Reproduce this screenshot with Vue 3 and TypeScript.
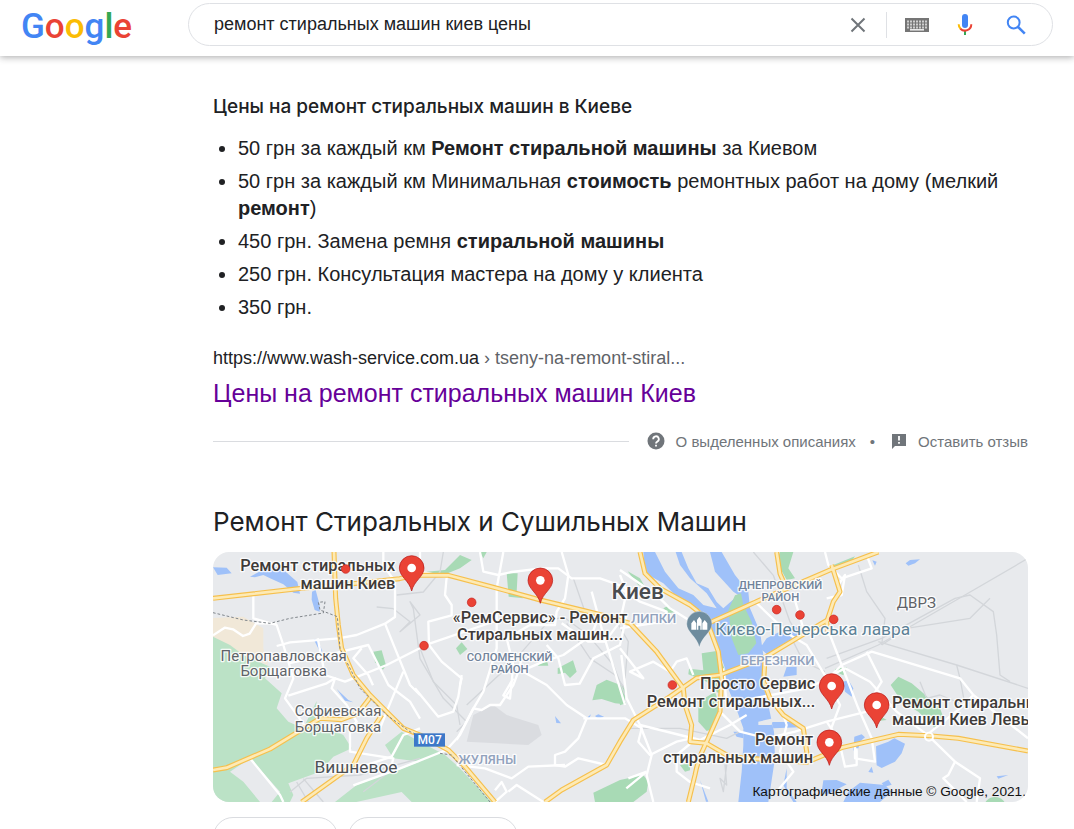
<script setup lang="ts">
import { ref } from 'vue'

interface Run { text: string; bold?: boolean }
interface Label { x: number; y: number; text: string; kind: string; anchor?: 'start' | 'middle' | 'end' }

const query = ref('ремонт стиральных машин киев цены')

const prices: Run[][] = [
  [{ text: '50 грн за каждый км ' }, { text: 'Ремонт стиральной машины', bold: true }, { text: ' за Киевом' }],
  [
    { text: '50 грн за каждый км Минимальная ' },
    { text: 'стоимость', bold: true },
    { text: ' ремонтных работ на дому (мелкий ' },
    { text: 'ремонт', bold: true },
    { text: ')' },
  ],
  [{ text: '450 грн. Замена ремня ' }, { text: 'стиральной машины', bold: true }],
  [{ text: '250 грн. Консультация мастера на дому у клиента' }],
  [{ text: '350 грн.' }],
]

const highways: string[] = [
  'M0 139L266 109L420 95L560 80L606 70H706L846 107L982 144L1106 174L1186 194L1251 214',
  'M363 0L368 139L376 219L386 289L421 369L471 429L521 479L571 529L621 549L706 594L756 644L846 750',
  'M0 654L41 647L171 591L281 524L321 499L385 503L435 484L475 432',
  'M506 489L461 559L421 639L266 750',
  'M996 750L1046 714L1181 639L1221 569L1261 504L1371 434L1451 378L1521 369L1651 319L1751 259L1851 199',
  'M1281 0L1296 64L1341 109L1431 159Q1475 190 1490 229L1516 299L1526 379L1521 479L1481 569Q1455 620 1446 669L1426 750',
  'M1486 214L1641 144L1721 110L1851 54L1996 0',
  'M1691 0L1701 65L1721 110',
  'M1251 214L1331 299L1411 409L1416 459L1436 519L1431 569L1481 574L1551 615L1651 622L1781 631L1886 587L2056 547L2146 551L2236 559L2445 597',
  'M1656 319L1652 389L1671 439L1711 489L1771 529L1786 634',
  'M1856 39L1881 119L1861 149L1841 210L1845 240',
]

const streets: string[] = [
  'M121 129V199L191 219L211 279L241 379L216 439L281 529',
  'M0 250L35 227L60 232L90 252L110 245L130 213L191 214',
  'M191 282L231 271L376 259L431 249L516 215L546 195V89L511 40V0',
  'M226 334L296 319L386 299L466 279L526 399L591 449L621 500',
  'M314 259L336 369L396 389L421 379L521 339L641 278L856 204',
  'M226 431L341 394L366 379L356 409L401 459L431 509L411 529V599L541 619L531 659',
  'M516 215L546 289L591 399L621 429',
  'M571 359L521 479L501 529',
  'M446 289L421 319L466 369L480 400',
  'M111 619L201 729L211 750',
  'M366 639L386 664L536 614L571 549L621 529',
  'M421 700L560 650L700 594L741 549L781 469L806 474L831 459L861 459L901 399L916 359L931 300',
  'M731 564L781 470L811 419L851 289L851 109L871 0',
  'M621 0V60L701 75L696 129L716 159V190L646 209L648 279L686 329L746 379L741 399',
  'M606 409L676 494L721 479L736 434L746 369',
  'M801 0L811 59L856 69L896 60L986 49L1036 49L1076 79L1161 79L1246 109',
  'M1046 0L1066 69L1056 139L1031 179L1026 219L951 219L881 259L901 339L891 440L871 430L901 379',
  'M931 359L1001 399L1061 459L1121 499L1096 559L1056 599L1026 609V639L1056 644L1096 619L1181 639',
  'M921 359L991 329L1051 309L1136 249L1151 209',
  'M1001 279L1036 319L1056 399L1100 395L1141 319L1221 279L1241 190',
  'M1111 499H1236L1286 529L1276 569L1311 609L1391 569L1431 560',
  'M1136 119L1166 229L1236 459',
  'M1046 214L1126 269L1176 269L1221 209L1241 119L1221 69',
  'M731 639L816 649L896 679L946 644L1056 639',
  'M846 750L881 719L866 690L846 715',
  'M886 719L911 699L991 750',
  'M1221 54L1301 109L1341 139L1371 169L1451 219L1461 269',
  'M1221 229L1351 209L1361 179L1281 149L1221 109',
  'M1221 289L1291 379L1251 359L1321 329L1371 359L1391 329L1421 319L1441 369',
  'M1225 309L1241 439L1281 519L1316 609L1301 670L1321 750',
  'M1281 519L1461 564L1551 519L1601 489',
  'M1451 559L1391 609V659L1431 690L1491 709',
  'M1531 349L1541 459L1621 439L1781 409L1846 379L1886 339L1976 299L2241 379L2281 429L2445 559',
  'M1521 479L1581 539L1661 559L1746 539L1841 509L1961 479L2041 459',
  'M1701 459L1721 519L1701 599L1741 659L1691 719',
  'M1621 144L1731 249L1781 279L1841 379L1881 459L1851 539',
  'M1741 129L1771 229L1851 249L1886 339L1936 469L1976 559L1986 629L1926 619L1926 574',
  'M1836 0L1846 39L1886 79L1976 49L1961 9',
  'M1841 139L1886 129L1896 69L1876 99',
  'M1836 379L1896 349L1971 389L2051 479L2146 551L2226 629L2206 669L2191 679L2261 750',
  'M1961 299L2006 389L1981 429',
  'M2226 629L2301 679L2291 750',
  'M1881 579L1896 644L1931 639V589',
  'M2281 429L2241 469L2151 541',
  'M1246 679L1301 659M1240 709L1301 659',
  'M1841 509L1881 569',
]

const rails: string[] = [
  'M491 165L541 170L591 209L561 239L621 189L591 149L601 170L621 320L691 439L761 509L731 539',
  'M551 129L631 120L681 60L691 0',
  'M741 519L731 459L661 389L621 289',
  'M761 459L901 329L1006 209L1051 194L1126 250L1201 339L1236 430',
  'M1061 214L1131 319L1206 369L1236 410',
  'M1081 79L1116 179L1211 209L1246 269L1236 379',
  'M231 720L281 679L441 669L621 619',
  'M251 690L286 750M271 680L331 750M451 719L541 650',
  'M1836 349L1996 279L2256 129L2445 19',
  'M1841 319L2006 259L2226 139L2271 129L2341 179L2351 249L2361 369L2391 389',
  'M1996 269L2231 339L2445 409',
  'M1936 39L1961 119L2016 199L2006 279',
  'M2006 279L2081 229L2271 199L2331 139',
  'M2121 389L2141 439L2181 429L2256 459L2241 379L2231 339',
  'M1736 259L1771 329L1836 359',
  'M1241 529L1401 529L1541 559L1581 539',
  'M1621 0L1681 70L1731 209L1751 240',
  'M1536 639L1541 699L1521 679L1531 719L1541 639Z',
]

const labels: Label[] = [
  { x: 212, y: 326, text: 'Петропавловская', kind: 'town' },
  { x: 212, y: 371, text: 'Борщаговка', kind: 'town' },
  { x: 375, y: 492, text: 'Софиевская', kind: 'town' },
  { x: 375, y: 540, text: 'Борщаговка', kind: 'town' },
  { x: 429, y: 662, text: 'Вишневое', kind: 'suburb' },
  { x: 2110, y: 169, text: 'ДВРЗ', kind: 'town' },
  { x: 1274, y: 141, text: 'Киев', kind: 'city' },
  { x: 890, y: 327, text: 'СОЛОМЕНСКИЙ', kind: 'district' },
  { x: 890, y: 363, text: 'РАЙОН', kind: 'district' },
  { x: 1702, y: 110, text: 'ДНЕПРОВСКИЙ', kind: 'district' },
  { x: 1702, y: 146, text: 'РАЙОН', kind: 'district' },
  { x: 823, y: 636, text: 'ЖУЛЯНЫ', kind: 'quarter' },
  { x: 1322, y: 214, text: 'ЛИПКИ', kind: 'quarter' },
  { x: 1694, y: 340, text: 'БЕРЕЗНЯКИ', kind: 'quarter' },
  { x: 1507, y: 249, text: 'Києво-Печерська лавра', kind: 'landmark', anchor: 'start' },
  { x: 547, y: 57, text: 'Ремонт стиральных', kind: 'place', anchor: 'end' },
  { x: 547, y: 110, text: 'машин Киев', kind: 'place', anchor: 'end' },
  { x: 981, y: 213, text: '«РемСервис» - Ремонт', kind: 'place' },
  { x: 981, y: 265, text: 'Стиральных машин...', kind: 'place' },
  { x: 1807, y: 411, text: 'Просто Сервис', kind: 'place', anchor: 'end' },
  { x: 1807, y: 465, text: 'Ремонт стиральных...', kind: 'place', anchor: 'end' },
  { x: 1800, y: 579, text: 'Ремонт', kind: 'place', anchor: 'end' },
  { x: 1800, y: 632, text: 'стиральных машин', kind: 'place', anchor: 'end' },
  { x: 2037, y: 467, text: 'Ремонт стиральных', kind: 'place', anchor: 'start' },
  { x: 2037, y: 520, text: 'машин Киев Левый', kind: 'place', anchor: 'start' },
]

const pins = [[596, 48], [982, 85], [1856, 402], [1991, 459], [1849, 571]]
const dots = [[398, 51], [776, 151], [633, 281], [1691, 173], [1761, 189], [1378, 399], [1862, 202]]
</script>

<template>
  <div class="page">
    <header class="top">
      <a class="logo" href="#" aria-label="Google">
        <svg width="120" height="46" viewBox="0 0 120 46" aria-hidden="true">
          <text x="0" y="35"><tspan fill="#4285f4">G</tspan><tspan fill="#ea4335">o</tspan><tspan fill="#fbbc05">o</tspan><tspan fill="#4285f4">g</tspan><tspan fill="#34a853">l</tspan><tspan fill="#ea4335">e</tspan></text>
        </svg>
      </a>
      <form class="search" role="search" @submit.prevent>
        <input v-model="query" type="text" aria-label="Поиск" />
        <button class="icon clear" type="button" aria-label="Очистить" @click="query = ''">
          <svg width="24" height="24" viewBox="0 0 24 24"><path d="M5.500 5.500l13 13M18.500 5.500l-13 13" stroke="#70757a" stroke-width="2" fill="none" /></svg>
        </button>
        <span class="divider"></span>
        <button class="icon keys" type="button" aria-label="Экранная клавиатура">
          <svg width="24" height="24" viewBox="0 0 24 24">
            <rect y="5" width="24" height="14" fill="#757575" />
            <path d="M2 8.500h20M2 11.500h20M2 14.500h20" stroke="#cfcfcf" stroke-width="2" stroke-dasharray="2 1" />
            <path d="M5 16.800h14" stroke="#e8e8e8" stroke-width="1.600" />
          </svg>
        </button>
        <button class="icon mic" type="button" aria-label="Голосовой поиск">
          <svg width="24" height="24" viewBox="0 0 24 24">
            <rect x="9" y="1" width="6" height="14" rx="3" fill="#4285f4" />
            <path d="M11 18h2v4h-2z" fill="#34a853" />
            <path d="M5.700 11.200a6.400 6.400 0 0 0 2 4.800" fill="none" stroke="#fbbc05" stroke-width="2" />
            <path d="M7.400 15.700a6.400 6.400 0 0 0 10.900-4.500" fill="none" stroke="#ea4335" stroke-width="2" />
          </svg>
        </button>
        <button class="icon go" type="submit" aria-label="Найти">
          <svg width="24" height="24" viewBox="0 0 24 24"><circle cx="9.700" cy="9.500" r="5.900" fill="none" stroke="#4285f4" stroke-width="2" /><path d="M14 13.800l6.800 6.800" stroke="#4285f4" stroke-width="2.600" /></svg>
        </button>
      </form>
    </header>

    <main class="results">
      <section class="snippet">
        <h2>Цены на ремонт стиральных машин в Киеве</h2>
        <ul>
          <li v-for="(runs, i) in prices" :key="i"><template v-for="(run, j) in runs" :key="j"><b v-if="run.bold">{{ run.text }}</b><template v-else>{{ run.text }}</template></template></li>
        </ul>
        <a class="hit" href="#">
          <cite>https://www.wash-service.com.ua<span> › tseny-na-remont-stiral...</span></cite>
          <h3>Цены на ремонт стиральных машин Киев</h3>
        </a>
        <div class="about">
          <hr />
          <a href="#">
            <svg width="18" height="18" viewBox="0 0 18 18"><circle cx="9" cy="9" r="8.500" fill="#70757a" /><path d="M6.200 7.200a2.800 2.800 0 1 1 4.200 2.300c-.9.6-1.400 1-1.400 2" fill="none" stroke="#fff" stroke-width="1.800" /><path d="M8.100 12.700h1.800v1.800H8.100z" fill="#fff" /></svg>
            <span>О выделенных описаниях</span>
          </a>
          <span class="bullet">•</span>
          <a href="#">
            <svg width="16" height="16" viewBox="0 0 16 16"><path d="M1 1H15V13H4L1 16z" fill="#70757a" /><path d="M7.100 3h1.800v4.500H7.100zM7.100 9h1.800v1.800H7.100z" fill="#fff" /></svg>
            <span>Оставить отзыв</span>
          </a>
        </div>
      </section>

      <section class="local">
        <h2>Ремонт Стиральных и Сушильных Машин</h2>
        <svg class="map" viewBox="0 0 2445 750" preserveAspectRatio="xMidYMid slice" role="img" aria-label="Карта">
          <rect width="2445" height="750" fill="#e8eaed" />
          <path d="M0 198L91 194L151 229V289L166 340L91 309L0 254Z" fill="#f1e8d8" />
          <g fill="#bbe2c6">
            <path d="M0 254L51 279L91 309L171 344L156 379L206 424L191 469L226 509L271 529L311 447L306 500L340 525L391 549L416 589L361 614L321 659L226 694L241 729L231 750H176L201 719L111 619L51 659L91 689L141 750H0Z" />
            <path d="M566 539L621 569L696 609L736 644L836 750H596L566 720L430 750H366L431 699L511 669L621 629L541 619L516 579Z" />
          </g>
          <g fill="#a8dab5">
            <path d="M481 299L506 295L519 340L510 353L486 331Z" />
            <path d="M641 59L696 54L741 9L776 24L741 49L691 69Z" />
            <path d="M801 0L821 0L811 19Z" />
            <path d="M881 64H914L911 119L931 139L887 134Z" />
            <path d="M729 289L746 271L763 291L741 309Z" />
            <path d="M971 337L1003 329L1006 341L977 341Z" />
            <path d="M1034 349L1080 325L1091 359L1071 378L1056 362L1034 366Z" />
            <path d="M1138 445L1151 399L1181 383L1236 404V457L1206 454L1166 441Z" />
            <path d="M1141 722L1221 684L1291 669L1306 689L1301 719L1261 750H1146Z" />
            <path d="M1244 58L1281 79L1296 104L1276 100Z" />
            <path d="M1351 169L1366 161L1391 179L1366 184Z" />
            <path d="M1466 304L1511 297L1539 359L1516 424L1481 389L1426 367L1428 350L1471 355Z" />
            <path d="M1456 449L1506 420L1526 479L1506 529L1481 537L1456 509Z" />
            <path d="M1216 419L1239 454L1221 460ZM1401 639L1431 634V655L1416 659Z" />
            <path d="M1701 0H1741L1726 49L1746 79L1721 84L1691 29Z" />
            <path d="M1861 39L1926 13L1911 34L1866 49Z" />
            <path d="M2033 399L2056 374L2096 394L2126 419L2181 469L2196 509L2166 529L2116 479L2066 449Z" />
            <path d="M1866 351L1901 345L1891 370L1866 359ZM1996 489L2021 504L2001 506Z" />
            <circle cx="2346" cy="769" r="34" />
          </g>
          <g fill="#9fc1f9">
            <path d="M1291 0H1526L1566 69L1606 119L1611 169L1641 239L1651 309L1646 379L1666 459L1683 539L1686 619L1666 750H1576L1586 659L1591 579V529L1566 459L1541 399L1536 349L1511 279L1486 229L1461 174L1396 139L1351 94L1296 64Z" />
            <path d="M1591 539H1561L1571 554L1591 559ZM1676 510H1741L1761 526L1681 529Z" />
            <path d="M1641 289L1661 259L1741 219L1771 239L1661 306ZM1721 345L1751 344L1751 369L1711 374Z" />
            <path d="M1461 684L1486 749H1479ZM1721 649L1711 700L1741 750H1751L1721 709Z" />
            <path d="M0 46L41 47L56 64L14 69ZM111 74L171 43L206 49L253 90L261 125L241 122L211 97L176 81L151 69L126 76Z" />
            <path d="M297 119L308 114L320 159V179L305 174L296 143ZM302 262L312 261L328 297L323 304ZM371 411L406 444L421 451L396 446Z" />
            <path d="M1026 492L1044 514L1030 513ZM1121 498L1134 487L1128 501ZM1146 492L1156 487L1173 494L1156 500Z" />
            <path d="M1989 583L2026 569L2044 559L2076 575L2066 604L2046 629L2006 648L1991 640ZM1924 554L1946 547L1956 556L1946 564L1931 600L1921 595Z" />
            <path d="M1891 389L1906 384L1921 409L1916 434L1896 419ZM1966 660L1976 644L1981 662ZM2006 694L2026 683L2036 698L2016 704ZM1906 719L1941 692L2016 699L2036 719L2001 750H1891Z" />
            <path d="M1978 25L1991 29L1986 41ZM2078 34L2091 24L2121 22L2106 34L2086 41ZM2351 673L2386 669L2356 680ZM1831 685L1871 684L1901 697L1841 729L1826 719Z" />
          </g>
          <g fill="#e8eaed">
            <path d="M1326 0H1388L1401 39L1431 79L1481 124L1511 169L1471 159L1441 129L1396 109L1356 59Z" />
            <path d="M1406 0H1491L1506 59L1561 119L1576 129L1531 169L1511 150L1486 109L1451 94L1426 49Z" />
            <path d="M1621 139L1651 149L1661 229L1641 210ZM1636 509L1681 499L1676 519L1636 519Z" />
          </g>
          <path d="M1546 174L1566 130L1584 124L1591 159L1616 209L1630 274L1606 304L1576 309L1556 259Z" fill="#a8dab5" />
          <path d="M761 569L781 489L841 459L881 489L976 519L986 549L946 579L851 574Z" fill="#dadce0" />
          <g class="rails"><path v-for="d in rails" :key="d" :d="d" /></g>
          <g class="streets"><path v-for="d in streets" :key="d" :d="d" /></g>
          <g class="casing"><path v-for="d in highways" :key="d" :d="d" /></g>
          <g class="core"><path v-for="d in highways" :key="d" :d="d" /></g>
          <path class="border" d="M0 182L91 204L171 214L231 199L331 183L336 149L316 151L321 174L373 194L381 289L441 409L521 489L591 539L621 552M681 604L716 609L756 659L831 750" />
          <circle cx="2148" cy="554" r="12" fill="none" stroke="#fff" stroke-width="6" />

          <rect x="603" y="544" width="93" height="40" fill="#3d78c8" />
          <text class="shield" x="650" y="577">M07</text>

          <g transform="translate(1459 216)">
            <path d="M0 70C-7 38-38 24-38 0A38 38 0 1 1 38 0C38 24 7 38 0 70Z" fill="#6e8c9e" stroke="#fff" stroke-opacity=".5" stroke-width="2" />
            <path d="M-24 17V-2L-16-12L-9-2V17ZM9 17V-2L16-12L24-2V17ZM-7 17V-12L0-22L7-12V17H3V5H-3V17Z" fill="#fff" />
          </g>

          <text v-for="(l, i) in labels" :key="i" :x="l.x" :y="l.y" :class="['label', l.kind]" :text-anchor="l.anchor ?? 'middle'">{{ l.text }}</text>

          <circle v-for="(d, i) in dots" :key="'d' + i" :cx="d[0]" :cy="d[1]" r="13" fill="#ea4335" stroke="#c5221f" stroke-width="2" />
          <g v-for="(p, i) in pins" :key="'p' + i" :transform="`translate(${p[0]} ${p[1]})`">
            <path d="M0 69C-7 38-37 26-37 0A37 37 0 1 1 37 0C37 26 7 38 0 69Z" fill="#ea4335" stroke="#b31412" stroke-width="2" />
            <circle r="13" fill="#fff" />
          </g>
          <text class="credit" x="2439" y="733" text-anchor="end">Картографические данные © Google, 2021.</text>
        </svg>
        <div class="chips">
          <button class="chip" type="button" aria-label="Рейтинг"></button>
          <button class="chip wide" type="button" aria-label="Часы работы"></button>
        </div>
      </section>
    </main>
  </div>
</template>

<style>
body {
  margin: 0;
  background: #fff;
}
</style>

<style scoped>
.page {
  height: 100vh;
  overflow: hidden;
  font-family: "Liberation Sans", Arial, sans-serif;
  color: #202124;
}
.top {
  display: flex;
  align-items: flex-start;
  box-sizing: border-box;
  height: 56px;
  padding: 3px 21px 0;
  box-shadow: 0 1px 7px rgba(32, 33, 36, 0.4);
}
.logo {
  flex: 0 0 167px;
}
.logo svg {
  display: block;
}
.logo text {
  font: 500 35px Roboto, sans-serif;
}
.search {
  flex: 1;
  display: flex;
  align-items: center;
  box-sizing: border-box;
  height: 43px;
  padding: 0 24px 0 25px;
  border: 1px solid #dfe1e5;
  border-radius: 22px;
}
.search input {
  flex: 1;
  min-width: 0;
  padding: 0;
  border: 0;
  outline: 0;
  background: none;
  font: 18px "Liberation Sans", Arial, sans-serif;
  color: #202124;
}
.icon {
  width: 24px;
  height: 24px;
  padding: 0;
  border: 0;
  background: none;
}
.icon svg {
  display: block;
}
.divider {
  width: 1px;
  height: 26px;
  margin: 0 18px 0 16px;
  background: #dfe1e5;
}
.mic {
  margin: 0 27px 0 24px;
}
.results {
  padding: 37px 46px 0 213px;
}
h2,
h3,
ul {
  margin: 0;
  padding: 0;
}
.snippet h2 {
  font: 500 19px/28px Inter, sans-serif;
}
.snippet ul {
  display: flex;
  flex-direction: column;
  gap: 6px;
  margin-top: 14px;
  padding-left: 25px;
  font-size: 20px;
  line-height: 27px;
}
.hit {
  display: inline-block;
  margin-top: 25px;
  text-decoration: none;
}
.hit cite {
  display: block;
  font-size: 18px;
  font-style: normal;
  line-height: 24px;
  color: #202124;
}
.hit cite span {
  color: #5f6368;
}
.hit h3 {
  margin-top: 7px;
  font-size: 25px;
  font-weight: 400;
  line-height: 32px;
  color: #609;
}
.about {
  display: flex;
  align-items: center;
  height: 24px;
  margin-top: 20px;
  font-size: 15px;
  color: #70757a;
}
.about hr {
  flex: 1;
  margin: 0 18px 0 0;
  border: 0;
  border-top: 1px solid #dadce0;
}
.about a {
  display: flex;
  align-items: center;
  gap: 11px;
  color: inherit;
  text-decoration: none;
}
.bullet {
  margin: 0 16px 0 14px;
}
.local h2 {
  margin-top: 51px;
  font: 400 26px/36px Inter, sans-serif;
}
.map {
  display: block;
  width: 100%;
  margin-top: 12px;
  border-radius: 16px;
}
.map path {
  stroke-linejoin: round;
}
.rails path {
  fill: none;
  stroke: #d3d6da;
  stroke-width: 4;
}
.streets path {
  fill: none;
  stroke: #fff;
  stroke-width: 7;
}
.casing path {
  fill: none;
  stroke: #f6c04d;
  stroke-width: 15;
}
.core path {
  fill: none;
  stroke: #fdeab5;
  stroke-width: 8;
}
.border {
  fill: none;
  stroke: #80868b;
  stroke-width: 3;
  stroke-dasharray: 8 6;
}
.label {
  font-family: Roboto, sans-serif;
  paint-order: stroke;
  stroke: #fff;
  stroke-opacity: 0.85;
  stroke-width: 8;
  stroke-linejoin: round;
}
.town {
  font-size: 45px;
  fill: #5f6368;
}
.suburb {
  font-size: 52px;
  fill: #4d5156;
}
.city {
  font-size: 68px;
  font-weight: 500;
  fill: #494c50;
}
.district {
  font-size: 34px;
  font-weight: 500;
  fill: #71839a;
}
.quarter {
  font-size: 39px;
  font-weight: 500;
  fill: #91a2bd;
}
.landmark {
  font-size: 52px;
  fill: #5c8196;
}
.place {
  font-size: 49px;
  font-weight: 500;
  fill: #3f3b39;
}
.shield {
  font: 500 36px Roboto, sans-serif;
  fill: #fff;
  text-anchor: middle;
}
.credit {
  font: 41px "Liberation Sans", Arial, sans-serif;
  fill: #111;
}
.chips {
  display: flex;
  gap: 10px;
  margin-top: 15px;
}
.chip {
  width: 125px;
  height: 40px;
  border: 1px solid #dadce0;
  border-radius: 20px;
  background: #fff;
}
.chip.wide {
  width: 170px;
}
</style>
